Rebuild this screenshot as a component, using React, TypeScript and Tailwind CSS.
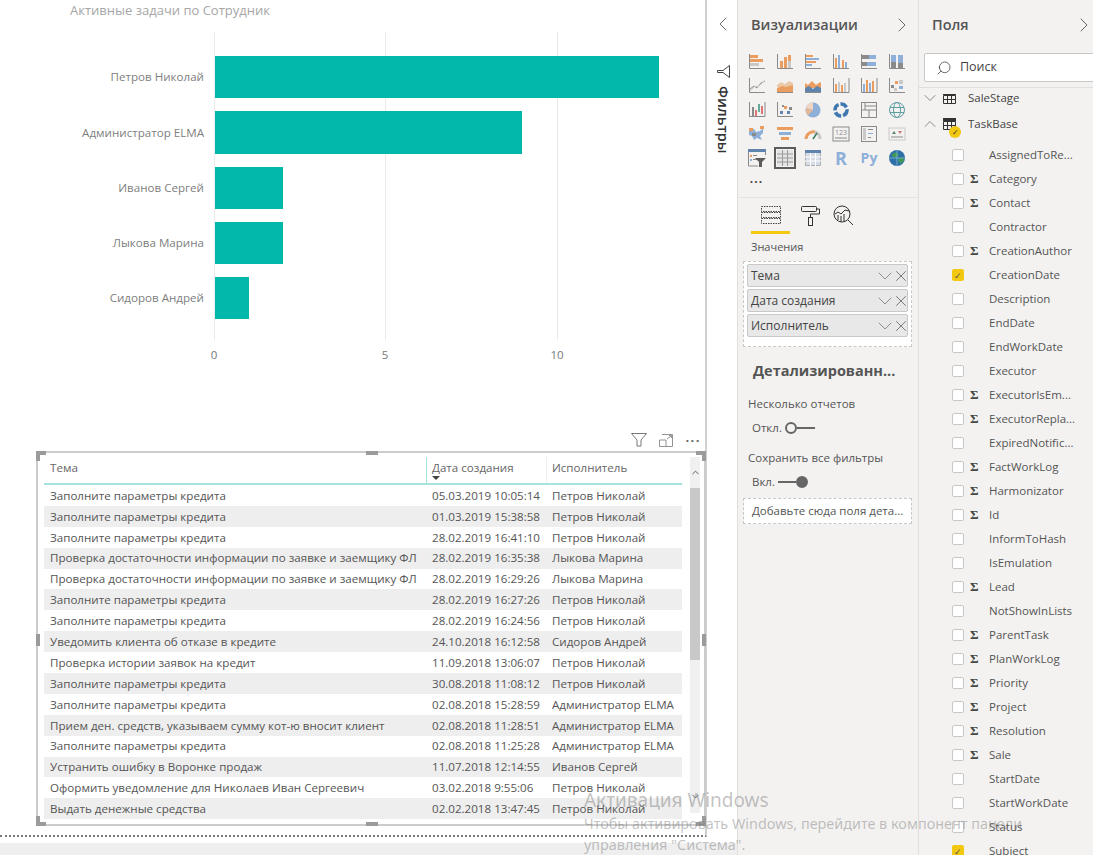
import { ChevronLeft, ChevronRight, ChevronDown, ChevronUp, X, Search } from "lucide-react";

const font = "font-['Open_Sans','Noto_Sans',sans-serif]";

const bars = [
  { name: "Петров Николай", y: 56, h: 42, w: 444 },
  { name: "Администратор ELMA", y: 111, h: 43, w: 307 },
  { name: "Иванов Сергей", y: 167, h: 42, w: 68 },
  { name: "Лыкова Марина", y: 222, h: 42, w: 68 },
  { name: "Сидоров Андрей", y: 277, h: 42, w: 34 },
];

const credit = "Заполните параметры кредита";
const check = "Проверка достаточности информации по заявке и заемщику ФЛ";
const petrov = "Петров Николай";
const admin = "Администратор ELMA";

const rows = [
  [credit, "05.03.2019 10:05:14", petrov],
  [credit, "01.03.2019 15:38:58", petrov],
  [credit, "28.02.2019 16:41:10", petrov],
  [check, "28.02.2019 16:35:38", "Лыкова Марина"],
  [check, "28.02.2019 16:29:26", "Лыкова Марина"],
  [credit, "28.02.2019 16:27:26", petrov],
  [credit, "28.02.2019 16:24:56", petrov],
  ["Уведомить клиента об отказе в кредите", "24.10.2018 16:12:58", "Сидоров Андрей"],
  ["Проверка истории заявок на кредит", "11.09.2018 13:06:07", petrov],
  [credit, "30.08.2018 11:08:12", petrov],
  [credit, "02.08.2018 15:28:59", admin],
  ["Прием ден. средств, указываем сумму кот-ю вносит клиент", "02.08.2018 11:28:51", admin],
  [credit, "02.08.2018 11:25:28", admin],
  ["Устранить ошибку в Воронке продаж", "11.07.2018 12:14:55", "Иванов Сергей"],
  ["Оформить уведомление для Николаев Иван Сергеевич", "03.02.2018 9:55:06", petrov],
  ["Выдать денежные средства", "02.02.2018 13:47:45", petrov],
];

const fields: [string, boolean, boolean][] = [
  ["AssignedToRe...", false, false],
  ["Category", true, false],
  ["Contact", true, false],
  ["Contractor", false, false],
  ["CreationAuthor", true, false],
  ["CreationDate", false, true],
  ["Description", false, false],
  ["EndDate", false, false],
  ["EndWorkDate", false, false],
  ["Executor", false, false],
  ["ExecutorIsEm...", true, false],
  ["ExecutorRepla...", true, false],
  ["ExpiredNotific...", false, false],
  ["FactWorkLog", true, false],
  ["Harmonizator", true, false],
  ["Id", true, false],
  ["InformToHash", false, false],
  ["IsEmulation", false, false],
  ["Lead", true, false],
  ["NotShowInLists", false, false],
  ["ParentTask", true, false],
  ["PlanWorkLog", true, false],
  ["Priority", true, false],
  ["Project", true, false],
  ["Resolution", true, false],
  ["Sale", true, false],
  ["StartDate", false, false],
  ["StartWorkDate", false, false],
  ["Status", false, false],
  ["Subject", false, true],
];

const O = "#eb9c5f";
const B = "#8dafd8";
const G = "#8a8a8a";
const L = "#c9c9c9";

// tiny rect shorthand: x, y, w, h, colour
type R = [number, number, number, number, string];
const Rects = ({ r }: { r: R[] }) => (
  <>
    {r.map(([x, y, w, h, c], i) => (
      <rect key={i} x={x} y={y} width={w} height={h} fill={c} />
    ))}
  </>
);
const Axis = () => <path d="M1.5 1v14.5H17" fill="none" stroke={G} strokeWidth="1" />;

const vizIcons = [
  <><Axis /><Rects r={[[2, 2, 8, 3, O], [2, 6, 13, 3, O], [2, 10, 9, 3, L]]} /></>,
  <><Axis /><Rects r={[[4, 8, 3, 7, O], [8, 4, 3, 11, O], [12, 2, 3, 6, O], [12, 8, 3, 7, L]]} /></>,
  <><Axis /><Rects r={[[2, 2, 7, 2, O], [2, 5, 13, 2, B], [2, 8, 10, 2, O], [2, 11, 6, 2, B]]} /></>,
  <><Axis /><Rects r={[[3, 5, 2, 10, O], [6, 2, 2, 13, B], [10, 7, 2, 8, O], [13, 9, 2, 6, B]]} /></>,
  <><Axis /><Rects r={[[2, 2, 7, 4, G], [9, 2, 7, 4, B], [2, 9, 5, 4, G], [7, 9, 9, 4, B]]} /></>,
  <><Axis /><Rects r={[[3, 2, 5, 7, B], [3, 9, 5, 6, G], [10, 2, 5, 8, B], [10, 10, 5, 5, G]]} /></>,
  <><Axis /><path d="M2 12l4-3 3 2 4-5 4-2" fill="none" stroke={G} /><path d="M2 14l5-5 3 1 6-6" fill="none" stroke={L} /></>,
  <><path d="M1 8l4-3 4 2 4-3 4 2v4H1z" fill="#e9c9a8" /><path d="M1 11l5-2 4 1 7-2v7.5H1z" fill={O} /><path d="M1 15.5h16" stroke={G} /></>,
  <><path d="M1 6l3 2 4-4 4 4 4-3 1 1v5H1z" fill={O} /><path d="M1 11l4-2 4 3 4-3 4 2v4.5H1z" fill="#5f84ad" /><path d="M1 15.5h16" stroke={G} /></>,
  <><Axis /><path d="M17 1v14.5" stroke={G} /><Rects r={[[3, 7, 2, 8, O], [6, 5, 2, 10, L], [9, 8, 2, 7, O], [12, 6, 2, 9, L]]} /></>,
  <><Axis /><path d="M17 1v14.5" stroke={G} /><Rects r={[[3, 7, 2, 8, B], [6, 3, 2, 12, O], [9, 6, 2, 9, B], [12, 4, 2, 11, O]]} /></>,
  <><Axis /><Rects r={[[3, 8, 3, 3, G], [7, 4, 3, 3, O], [11, 3, 4, 4, L], [6, 11, 3, 3, L], [11, 9, 4, 3, B]]} /></>,
  <><Axis /><path d="M17 1v14.5H1" fill="none" stroke={G} /><Rects r={[[4, 6, 2, 9, G], [7, 9, 2, 6, "#d77"], [10, 3, 2, 8, "#6a9"], [13, 5, 2, 8, "#d77"]]} /></>,
  <><Axis /><Rects r={[[4, 10, 3, 3, "#5f84ad"], [8, 5, 3, 3, O], [11, 10, 3, 3, "#5f84ad"], [13, 6, 3, 3, G], [6, 4, 2, 2, G]]} /></>,
  <><circle cx="9" cy="9" r="7.5" fill={B} /><path d="M9 9V1.5A7.5 7.5 0 0 0 2 7z" fill="#f0d5c0" /><path d="M9 9L2 7a7.5 7.5 0 0 0 2 7.5z" fill="#e3b89a" /></>,
  <><circle cx="9" cy="9" r="6" fill="none" stroke="#3f78b0" strokeWidth="3.5" strokeDasharray="7 2" /></>,
  <><rect x="1.5" y="1.5" width="15" height="15" fill="none" stroke={G} /><path d="M1.5 9h15M9 9v7.5M5 1.5V9M5 5h11" stroke={G} fill="none" /></>,
  <><circle cx="9" cy="9" r="7.5" fill="none" stroke="#5f9ea0" /><ellipse cx="9" cy="9" rx="3.5" ry="7.5" fill="none" stroke="#5f9ea0" /><path d="M2 6.5h14M2 11.5h14" stroke="#5f9ea0" /></>,
  <><path d="M1 3l5 1 2 3 4-1 3-3v5l-3 3 2 4-5-2-3 2-2-4-3-1z" fill={B} /><path d="M12 1h4v3h-4zM1 3h4v3H1z" fill={O} /><path d="M4 8h4v3H4z" fill={G} /></>,
  <><Rects r={[[1, 2, 16, 3, O], [3, 7, 12, 3, B], [5, 12, 8, 3, O]]} /></>,
  <><path d="M2 14a7.5 7.5 0 0 1 9-7" fill="none" stroke={O} strokeWidth="3" /><path d="M11 7a7.5 7.5 0 0 1 5 7" fill="none" stroke={L} strokeWidth="3" /><path d="M9 14l4-6" stroke="#3a7a5a" strokeWidth="1.5" /></>,
  <><rect x="1" y="2" width="16" height="14" fill="none" stroke={G} /><path d="M3 13h12" stroke={G} /><text x="9" y="10" textAnchor="middle" fontSize="7" fill={G}>123</text></>,
  <><rect x="1.5" y="1.5" width="15" height="15" fill="none" stroke={G} /><Rects r={[[3, 3, 3, 12, L], [8, 4, 5, 1, G], [8, 8, 5, 1, B], [8, 12, 3, 1, G]]} /></>,
  <><rect x="1" y="3" width="16" height="12" fill="none" stroke={L} /><path d="M4 9l2-3 2 3z" fill="#5a8a6a" /><path d="M10 6h4l-2 3z" fill="#c77" /><path d="M3 12h12" stroke={G} /></>,
  <><rect x="0" y="0" width="18" height="3" fill="#5f84ad" /><path d="M.5 3v14H10M17.5 3v3" fill="none" stroke={G} /><Rects r={[[2, 6, 2, 2, O], [2, 10, 2, 2, B], [5, 6, 4, 1, G], [5, 10, 4, 1, G]]} /><path d="M7 9h11l-4 4v5h-3v-5z" fill="#5c5c5c" /></>,
  <><rect x="1" y="1" width="16" height="16" fill="#e4e4e4" /><path d="M1 5h16M1 9h16M1 13h16M6.5 1v16M11.5 1v16" stroke="#9a9a9a" /></>,
  <><rect x="1.5" y="1.5" width="15" height="15" fill="#d5dce5" stroke={G} strokeWidth=".6" /><rect x="1" y="1" width="16" height="3" fill="#5f84ad" /><path d="M1 8h16M1 12h16M6.5 4v13M11.5 4v13" stroke="#fff" /></>,
  <text x="9" y="15.5" textAnchor="middle" fontSize="18" fontWeight="700" fill="#8dafd8">R</text>,
  <text x="9" y="14" textAnchor="middle" fontSize="14" fontWeight="700" fill="#8dafd8">Py</text>,
  <><circle cx="9" cy="9" r="8" fill="#2f6fa8" /><path d="M3 6l5-3 3 3-4 3zM10 10l5-2 1 4-4 3z" fill="#3f9a5a" /><path d="M1 9h16M9 1v16" stroke="#9cd" strokeWidth=".6" /></>,
];

function Chart() {
  return (
    <svg width="704" height="350" className="block shrink-0" fontFamily="'Open Sans', sans-serif">
      {[214.5, 385.5, 557.5].map((x) => (
        <line key={x} x1={x} x2={x} y1="12" y2="320" stroke="#eaeaea" />
      ))}
      {bars.map((b) => (
        <g key={b.name}>
          <text x="204" y={b.y + b.h / 2 - 16} textAnchor="end" fontSize="11.6" fill="#808080">{b.name}</text>
          <rect x="215" y={b.y - 20} width={b.w} height={b.h} fill="#01b8aa" />
        </g>
      ))}
      {[["0", 214], ["5", 385], ["10", 557]].map(([t, x]) => (
        <text key={t} x={x} y="339" textAnchor="middle" fontSize="11.5" fill="#777">{t}</text>
      ))}
    </svg>
  );
}

function Handle({ className }: { className: string }) {
  return <div className={`absolute bg-[#9b9b9b] ${className}`} />;
}

function TablePanel() {
  return (
    <div className="relative ml-[36px] w-[670px] h-[375px] border-2 border-[#cccccc] bg-white pl-[6px] pt-[4px]">
      {/* corner and edge handles */}
      <Handle className="-left-[2px] -top-[2px] w-[10px] h-[4px]" />
      <Handle className="-left-[2px] -top-[2px] w-[4px] h-[10px]" />
      <Handle className="-right-[2px] -top-[2px] w-[10px] h-[4px]" />
      <Handle className="-right-[2px] -top-[2px] w-[4px] h-[10px]" />
      <Handle className="-left-[2px] -bottom-[2px] w-[10px] h-[4px]" />
      <Handle className="-left-[2px] -bottom-[2px] w-[4px] h-[10px]" />
      <Handle className="-right-[2px] -bottom-[2px] w-[10px] h-[4px]" />
      <Handle className="-right-[2px] -bottom-[2px] w-[4px] h-[10px]" />
      <Handle className="left-[328px] -top-[2px] w-[12px] h-[4px]" />
      <Handle className="left-[328px] -bottom-[2px] w-[12px] h-[4px]" />
      <Handle className="-left-[2px] top-[181px] w-[4px] h-[12px]" />
      <Handle className="-right-[2px] top-[181px] w-[4px] h-[12px]" />

      <div className="flex gap-[8px]">
        <div className="w-[638px] shrink-0">
          <div className="flex h-[28px] border-b-2 border-[#a6e3dc] text-[#666] text-[11.6px] items-center">
            <div className="w-[382px] pl-[6px] pb-[4px] h-full flex items-center">Тема</div>
            <div className="relative w-[120px] pl-[5px] pb-[4px] h-full flex items-center border-l border-[#a6e3dc]">
              Дата создания
              <span className="absolute left-[5px] top-[19px] w-0 h-0 border-x-[4px] border-x-transparent border-t-[4px] border-t-[#444]" />
            </div>
            <div className="pl-[5px] pb-[4px] h-full flex items-center border-l border-[#f0f0f0]">Исполнитель</div>
          </div>
          {rows.map((r, i) => (
            <div key={i} className={`flex h-[20.9px] items-center text-[11.6px] text-[#555] ${i % 2 ? "bg-[#eeeeee]" : "bg-white"}`}>
              <div className="w-[382px] pl-[6px] pr-[7px] whitespace-nowrap overflow-hidden">{r[0]}</div>
              <div className="w-[120px] pl-[6px] whitespace-nowrap">{r[1]}</div>
              <div className="pl-[6px] whitespace-nowrap">{r[2]}</div>
            </div>
          ))}
        </div>
        <div className="w-[10px] h-[356px] bg-[#f0f0f0] flex flex-col items-center">
          <ChevronUp size={11} className="h-[31px] text-[#555] shrink-0" />
          <div className="w-full h-[172px] bg-[#c8c8c8]" />
          <div className="flex-1" />
          <ChevronDown size={11} className="text-[#555] mb-[11px]" />
        </div>
      </div>
    </div>
  );
}

function Toggle({ on }: { on: boolean }) {
  return (
    <span className="flex items-center">
      {on && <span className="w-[18px] h-[2px] bg-[#666]" />}
      <span className={`w-[12px] h-[12px] rounded-full border-2 border-[#666] ${on ? "bg-[#666]" : ""}`} />
      {!on && <span className="w-[18px] h-[2px] bg-[#666]" />}
    </span>
  );
}

function Pill({ label }: { label: string }) {
  return (
    <div className="flex items-center h-[23px] bg-[#e8e8e8] border border-[#c8c8c8] rounded-[2px] pl-[3px] text-[12px] text-[#444] overflow-hidden">
      <span className="flex-1 whitespace-nowrap">{label}</span>
      <ChevronDown size={24} strokeWidth={0.7} className="text-[#666] shrink-0 -mr-[5px]" />
      <X size={18} strokeWidth={0.9} className="text-[#444] shrink-0 -mr-[3px]" />
    </div>
  );
}

function TableGlyph() {
  return (
    <svg width="13" height="12" viewBox="0 0 13 12" className="shrink-0">
      <path d="M.5 3.5h12v8H.5zM.5 7.5h12M4.5 3.5v8M8.5 3.5v8" fill="none" stroke="#333" />
      <rect x="0" y="0" width="13" height="3" fill="#333" />
    </svg>
  );
}

function VisualPanel() {
  return (
    <div className="w-[181px] shrink-0 bg-[#f3f2f1] border-r border-[#e1dfdd]">
      <div className="flex items-center h-[49px] pl-[13px] pr-[4px] text-[14.5px] font-semibold text-[#555]">
        <span className="flex-1">Визуализации</span>
        <ChevronRight size={24} strokeWidth={0.8} className="text-[#444]" />
      </div>
      <div className="mt-[1px] grid grid-cols-[repeat(6,28px)] auto-rows-[24px] pl-[5px] items-center justify-items-center">
        {vizIcons.map((ic, i) => (
          <div key={i} className={i === 25 ? "border-[2px] border-[#5c5c5c] w-[22px] h-[22px] flex items-center justify-center" : ""}>
            <svg width="18" height="18" viewBox="0 0 18 18" className="block overflow-visible" fontFamily="'Open Sans', sans-serif">{ic}</svg>
          </div>
        ))}
        <div className="text-[12px] leading-none text-[#444] tracking-[1px] font-bold pb-[6px] -ml-[1px]">...</div>
      </div>
      <div className="mt-[3px] border-t border-[#e6e4e2] h-[37px] flex pl-[13px] gap-[7px]">
        <div className="w-[39px] h-full border-b-[3px] border-[#f2c811] flex justify-center pt-[8px]">
          <svg width="20" height="19" viewBox="0 0 20 19" fill="none" stroke="#444" strokeDasharray="1.5 1">
            <rect x=".5" y=".5" width="19" height="5" />
            <rect x=".5" y="6.5" width="19" height="5" />
            <rect x=".5" y="12.5" width="19" height="5" />
          </svg>
        </div>
        <div className="w-[26px] flex justify-center pt-[8px]">
          <svg width="19" height="20" viewBox="0 0 19 20" fill="none" stroke="#333">
            <rect x=".5" y=".5" width="15" height="5" rx="1" />
            <path d="M15.5 3h3v5h-9v3" />
            <rect x="7.5" y="11.5" width="4" height="8" />
          </svg>
        </div>
        <div className="w-[26px] flex justify-center pt-[7px]">
          <svg width="21" height="21" viewBox="0 0 21 21" fill="none" stroke="#333">
            <circle cx="9" cy="9" r="8" />
            <path d="M15 15l5 5M2 9l3-2 3 2 4-4 4 1M5 10v5M8 11v6M11 9v7" />
          </svg>
        </div>
      </div>
      <div className="pl-[13px] pt-[5px] pb-[7px] text-[11px] leading-[15px] text-[#555]">Значения</div>
      <div className="mx-[5px] w-[169px] h-[86px] bg-white border border-dashed border-[#c8c8c8] px-[3px] pt-[2px] flex flex-col gap-[2px]">
        <Pill label="Тема" />
        <Pill label="Дата создания" />
        <Pill label="Исполнитель" />
      </div>
      <div className="pl-[15px] pt-[14px] text-[14.5px] leading-[20px] font-bold text-[#555] whitespace-nowrap">Детализированн...</div>
      <div className="pl-[10px] pt-[15px] text-[11.5px] text-[#555] leading-[16px]">Несколько отчетов</div>
      <div className="pl-[14px] pt-[8px] h-[24px] flex items-center gap-[3px] text-[11.5px] text-[#555] leading-[16px]">Откл. <Toggle on={false} /></div>
      <div className="pl-[10px] pt-[14px] text-[11.5px] text-[#555] leading-[16px]">Сохранить все фильтры</div>
      <div className="pl-[14px] pt-[8px] h-[24px] flex items-center gap-[3px] text-[11.5px] text-[#555] leading-[16px]">Вкл. <Toggle on /></div>
      <div className="mx-[5px] mt-[8px] w-[169px] h-[26px] bg-white border border-dashed border-[#c8c8c8] pl-[8px] flex items-center text-[11.5px] text-[#555] whitespace-nowrap">Добавьте сюда поля дета...</div>
    </div>
  );
}

function FieldsPanel() {
  return (
    <div className="flex-1 min-w-0 bg-[#f3f2f1] overflow-hidden">
      <div className="flex items-center h-[49px] pl-[13px] -mr-[3px] text-[14.5px] font-semibold text-[#555]">
        <span className="flex-1">Поля</span>
        <ChevronRight size={24} strokeWidth={0.8} className="text-[#444]" />
      </div>
      <div className="ml-[5px] w-[180px] h-[29px] mt-[4px] bg-white border border-[#c8c8c8] rounded-[2px] flex items-center pl-[11px] text-[12.5px] text-[#444]">
        <Search size={16} strokeWidth={1.2} className="-scale-x-100 mr-[8px]" />
        Поиск
      </div>
      <div className="mt-[5px] border-t border-[#e1dfdd]" />
      <div className="mt-[6px] h-[761px] overflow-hidden">
        {/* list is scrolled: its first row is cut by the top edge */}
        <div className="-mt-[8px] text-[11.5px] text-[#555]">
          <div className="flex items-center h-[24px] pl-[1px] gap-[1px]">
            <ChevronDown size={20} strokeWidth={0.8} className="text-[#555] shrink-0" />
            <span className="w-[1px]" />
            <TableGlyph />
            <span className="ml-[11px] text-[#444]">SaleStage</span>
          </div>
          <div className="relative mt-[1px] flex items-center h-[26px] pl-[1px] gap-[1px]">
            <ChevronUp size={20} strokeWidth={0.8} className="text-[#555] shrink-0" />
            <span className="w-[1px]" />
            <TableGlyph />
            <span className="ml-[11px] text-[#444]">TaskBase</span>
            <span className="absolute left-[30px] top-[15px] w-[12px] h-[12px] rounded-full bg-[#f2c811] flex items-center justify-center text-[8px] leading-none text-[#333]">✓</span>
          </div>
          <div className="h-[6px]" />
          {fields.map(([name, sigma, on]) => (
            <div key={name} className="flex items-center h-[24px] pl-[33px]">
              <span className={`w-[12px] h-[12px] shrink-0 rounded-[2px] border flex items-center justify-center text-[9px] leading-none ${on ? "bg-[#f2c811] border-[#f2c811] text-[#555]" : "bg-white border-[#c8c8c8]"}`}>{on ? "✓" : ""}</span>
              <span className="w-[25px] shrink-0 pl-[6px] text-[13px] font-bold font-['Liberation_Serif',serif] text-[#444]">{sigma ? "Σ" : ""}</span>
              <span className="whitespace-nowrap">{name}</span>
            </div>
          ))}
        </div>
      </div>
    </div>
  );
}

export default function App() {
  return (
    <div className={`relative flex w-[1093px] h-[855px] overflow-hidden bg-white ${font}`}>
      {/* report canvas + filters strip */}
      <div className="w-[738px] shrink-0 flex flex-col border-r border-[#e1dfdd]">
        <div className="flex h-[843px]">
          <div className="w-[707px] shrink-0 h-[837px] border-r-2 border-r-[#d0d0d0] border-b-2 border-b-[#777] [border-bottom-style:dotted]">
            <div className="pl-[70px] pt-[1px] h-[20px] text-[13px] leading-[18px] text-[#a6a6a6]">Активные задачи по Сотрудник</div>
            <Chart />
            <div className="h-[81px] flex items-end justify-end gap-[12px] pr-[4px] pb-[4px] text-[#666]">
              <svg width="16" height="14" viewBox="0 0 16 14" fill="none" stroke="#777"><path d="M.5.5h15L10 7v6H6V7z" /></svg>
              <svg width="14" height="13" viewBox="0 0 14 13" fill="none" stroke="#888"><path d="M.5 6V12.5H7V6zM3 .5h10.5v12H7M8 5l4-3M10 1.5h2.5V4" strokeWidth=".9" /></svg>
              <span className="text-[13px] leading-[13px] font-bold tracking-[1.5px] pb-[3px]">...</span>
            </div>
            <TablePanel />
          </div>
          <div className="flex-1 flex flex-col items-center pt-[12px] pl-[2px]">
            <ChevronLeft size={24} strokeWidth={0.8} className="text-[#444]" />
            <svg width="13" height="13" viewBox="0 0 13 13" fill="none" stroke="#444" className="mt-[29px]">
              <path d="M12.5.5v12L6 7.5H.5v-2H6z" />
            </svg>
            <div className="mt-[8px] [writing-mode:vertical-rl] text-[14.5px] leading-[18px] font-semibold text-[#333]">Фильтры</div>
          </div>
        </div>
        <div className="flex-1 bg-[#efefef]" />
      </div>
      <VisualPanel />
      <FieldsPanel />
      {/* activation watermark */}
      <div className="absolute left-[584px] top-[788px] text-[rgba(120,120,120,0.45)] pointer-events-none font-['Noto_Sans',sans-serif]">
        <div className="text-[19px] leading-[24px]">Активация Windows</div>
        <div className="text-[14.4px] leading-[21px] mt-[1px] w-[460px]">Чтобы активировать Windows, перейдите в компонент панели управления "Система".</div>
      </div>
    </div>
  );
}
